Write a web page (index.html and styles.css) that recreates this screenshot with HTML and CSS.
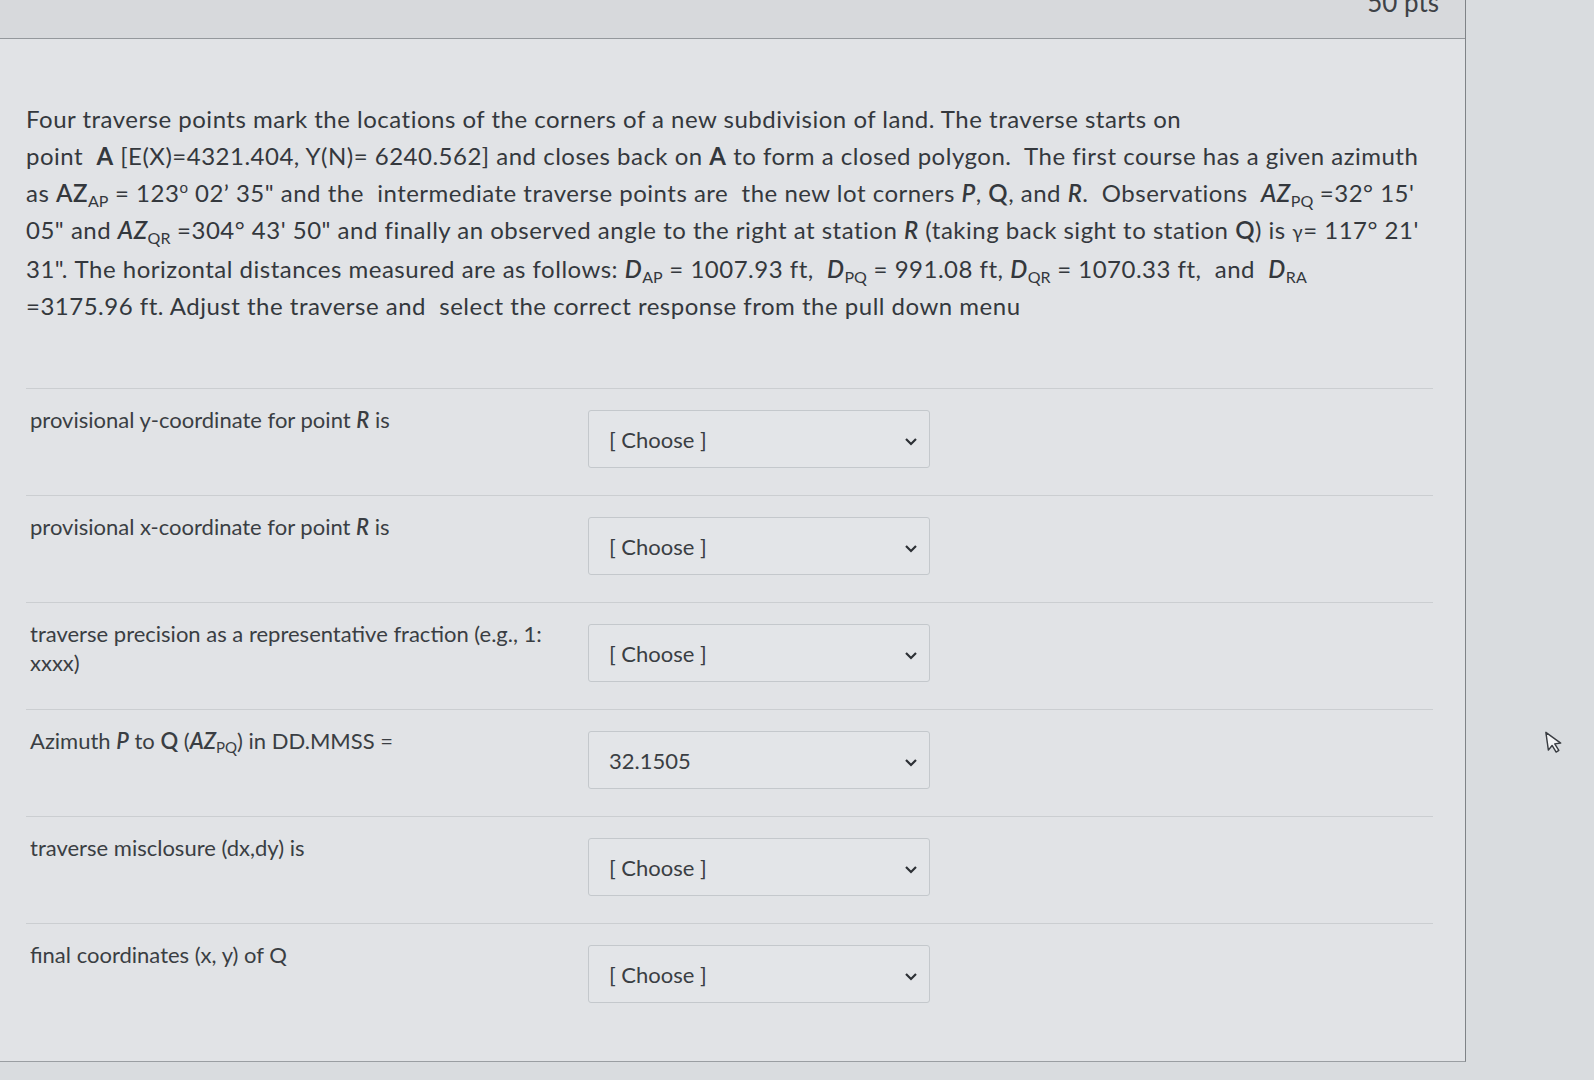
FILE: index.html
```html
<!DOCTYPE html>
<html lang="en">
<head>
<meta charset="utf-8">
<title>Traverse question</title>
<link rel="stylesheet" href="styles.css">
</head>
<body>
<div class="page">
  <div class="panel">
    <div class="header"><span class="pts">50 pts</span></div>
    <div class="content">
      <p class="question">
        Four traverse points mark the locations of the corners of a new subdivision of land. The traverse starts on<br>
        point&nbsp; <b class="b">A</b> [E(X)=4321.404, Y(N)= 6240.562] and closes back on <b class="b">A</b> to form a closed polygon.&nbsp; The first course has a given azimuth<br>
        as <span class="m">AZ</span><sub>AP</sub> = 123<sup class="deg">o</sup> 02’ 35" and the&nbsp; intermediate traverse points are&nbsp; the new lot corners <i class="m">P</i>, <span class="m">Q</span>, and <i class="m">R</i>.&nbsp; Observations&nbsp; <i class="m">AZ</i><sub>PQ</sub> =32° 15'<br>
        05" and <i class="m">AZ</i><sub>QR</sub> =304° 43' 50" and finally an observed angle to the right at station <i class="m">R</i> (taking back sight to station <span class="m">Q</span>) is <span class="g">γ</span>= 117° 21'<br>
        31". The horizontal distances measured are as follows: <i class="m">D</i><sub>AP</sub> = 1007.93 ft,&nbsp; <i class="m">D</i><sub>PQ</sub> = 991.08 ft, <i class="m">D</i><sub>QR</sub> = 1070.33 ft,&nbsp; and&nbsp; <i class="m">D</i><sub>RA</sub><br>
        =3175.96 ft. Adjust the traverse and&nbsp; select the correct response from the pull down menu
      </p>
      <div class="answers">
        <div class="row">
          <div class="label">provisional y-coordinate for point <i class="m">R</i> is</div>
          <div class="select"><span class="val">[ Choose ]</span><svg class="chev" viewBox="0 0 14 9" width="14" height="9"><path d="M2 2 L7 7 L12 2" fill="none" stroke="#2d3035" stroke-width="2.2"/></svg></div>
        </div>
        <div class="row">
          <div class="label">provisional x-coordinate for point <i class="m">R</i> is</div>
          <div class="select"><span class="val">[ Choose ]</span><svg class="chev" viewBox="0 0 14 9" width="14" height="9"><path d="M2 2 L7 7 L12 2" fill="none" stroke="#2d3035" stroke-width="2.2"/></svg></div>
        </div>
        <div class="row">
          <div class="label">traverse precision as a representative fraction (e.g., 1:<br>xxxx)</div>
          <div class="select"><span class="val">[ Choose ]</span><svg class="chev" viewBox="0 0 14 9" width="14" height="9"><path d="M2 2 L7 7 L12 2" fill="none" stroke="#2d3035" stroke-width="2.2"/></svg></div>
        </div>
        <div class="row">
          <div class="label">Azimuth <i class="m">P</i> to <span class="m">Q</span> (<i class="m">AZ</i><sub class="ls">PQ</sub>) in DD.MMSS =</div>
          <div class="select"><span class="val">32.1505</span><svg class="chev" viewBox="0 0 14 9" width="14" height="9"><path d="M2 2 L7 7 L12 2" fill="none" stroke="#2d3035" stroke-width="2.2"/></svg></div>
        </div>
        <div class="row">
          <div class="label">traverse misclosure (dx,dy) is</div>
          <div class="select"><span class="val">[ Choose ]</span><svg class="chev" viewBox="0 0 14 9" width="14" height="9"><path d="M2 2 L7 7 L12 2" fill="none" stroke="#2d3035" stroke-width="2.2"/></svg></div>
        </div>
        <div class="row last">
          <div class="label">final coordinates (x, y) of Q</div>
          <div class="select"><span class="val">[ Choose ]</span><svg class="chev" viewBox="0 0 14 9" width="14" height="9"><path d="M2 2 L7 7 L12 2" fill="none" stroke="#2d3035" stroke-width="2.2"/></svg></div>
        </div>
      </div>
    </div>
  </div>
  <svg class="cursor" viewBox="0 0 14 20" width="17" height="24"><path d="M1 1 L1 16 L4.6 12.6 L7.2 18.5 L9.6 17.4 L7 11.6 L12 11.6 Z" fill="#f4f5f6" stroke="#3a3d42" stroke-width="1.2" stroke-linejoin="round"/></svg>
</div>
</body>
</html>
```
FILE: styles.css
```css
html, body {
  margin: 0;
  padding: 0;
}
body {
  background: #d9dcdf;
  font-family: Lato, "Open Sans", "Liberation Sans", sans-serif;
  color: #34383d;
  width: 1594px;
  height: 1080px;
  overflow: hidden;
}
.page {
  position: relative;
  width: 1594px;
  height: 1080px;
}
.panel {
  width: 1466px;
  height: 1062px;
  background: #e1e3e6;
  border-right: 1px solid #7f8387;
  border-bottom: 1px solid #9a9ea2;
  box-sizing: border-box;
  display: flex;
  flex-direction: column;
}
.header {
  height: 39px;
  background: #d7d9dc;
  border-bottom: 1px solid #94989c;
  box-sizing: border-box;
  display: flex;
  justify-content: flex-end;
  align-items: flex-start;
  overflow: hidden;
  padding-right: 26px;
}
.pts {
  font-size: 26px;
  line-height: 26px;
  margin-top: -11px;
  color: #3e4247;
}
.content {
  padding: 0 0 0 26px;
}
.question {
  margin: 61px 0 0 0;
  font-size: 24px;
  line-height: 37px;
  color: #34383d;
  letter-spacing: 0.5px;
  white-space: nowrap;
}
.question sub {
  font-size: 16px;
  line-height: 0;
  vertical-align: -5px;
  letter-spacing: 0;
}
.question .deg {
  font-size: 15px;
  line-height: 0;
  vertical-align: 9px;
}
.b {
  font-weight: 700;
}
.m {
  font-weight: 600;
}
.g {
  font-size: 19px;
}
.answers {
  margin-top: 64px;
  margin-right: 32px;
}
.row {
  display: grid;
  grid-template-columns: 546px 342px;
  column-gap: 12px;
  border-top: 1px solid #cbced1;
  height: 107px;
  box-sizing: border-box;
  padding-left: 4px;
}
.row.last {
  height: 136px;
}
.label {
  font-size: 22px;
  line-height: 29px;
  padding-top: 16px;
  color: #3a3e43;
}
.label sub.ls {
  font-size: 15px;
  line-height: 0;
  vertical-align: -4px;
}
.select {
  margin-top: 21px;
  height: 58px;
  border: 1px solid #c4c8cc;
  border-radius: 3px;
  background: #e3e5e8;
  box-sizing: border-box;
  display: flex;
  align-items: center;
  justify-content: space-between;
  padding: 0 11px 0 20px;
}
.val {
  font-size: 22px;
  color: #3a3e43;
}
.chev {
  display: block;
  margin-top: 4px;
}
.cursor {
  position: absolute;
  left: 1546px;
  top: 730px;
  transform: rotate(-8deg);
}
```
